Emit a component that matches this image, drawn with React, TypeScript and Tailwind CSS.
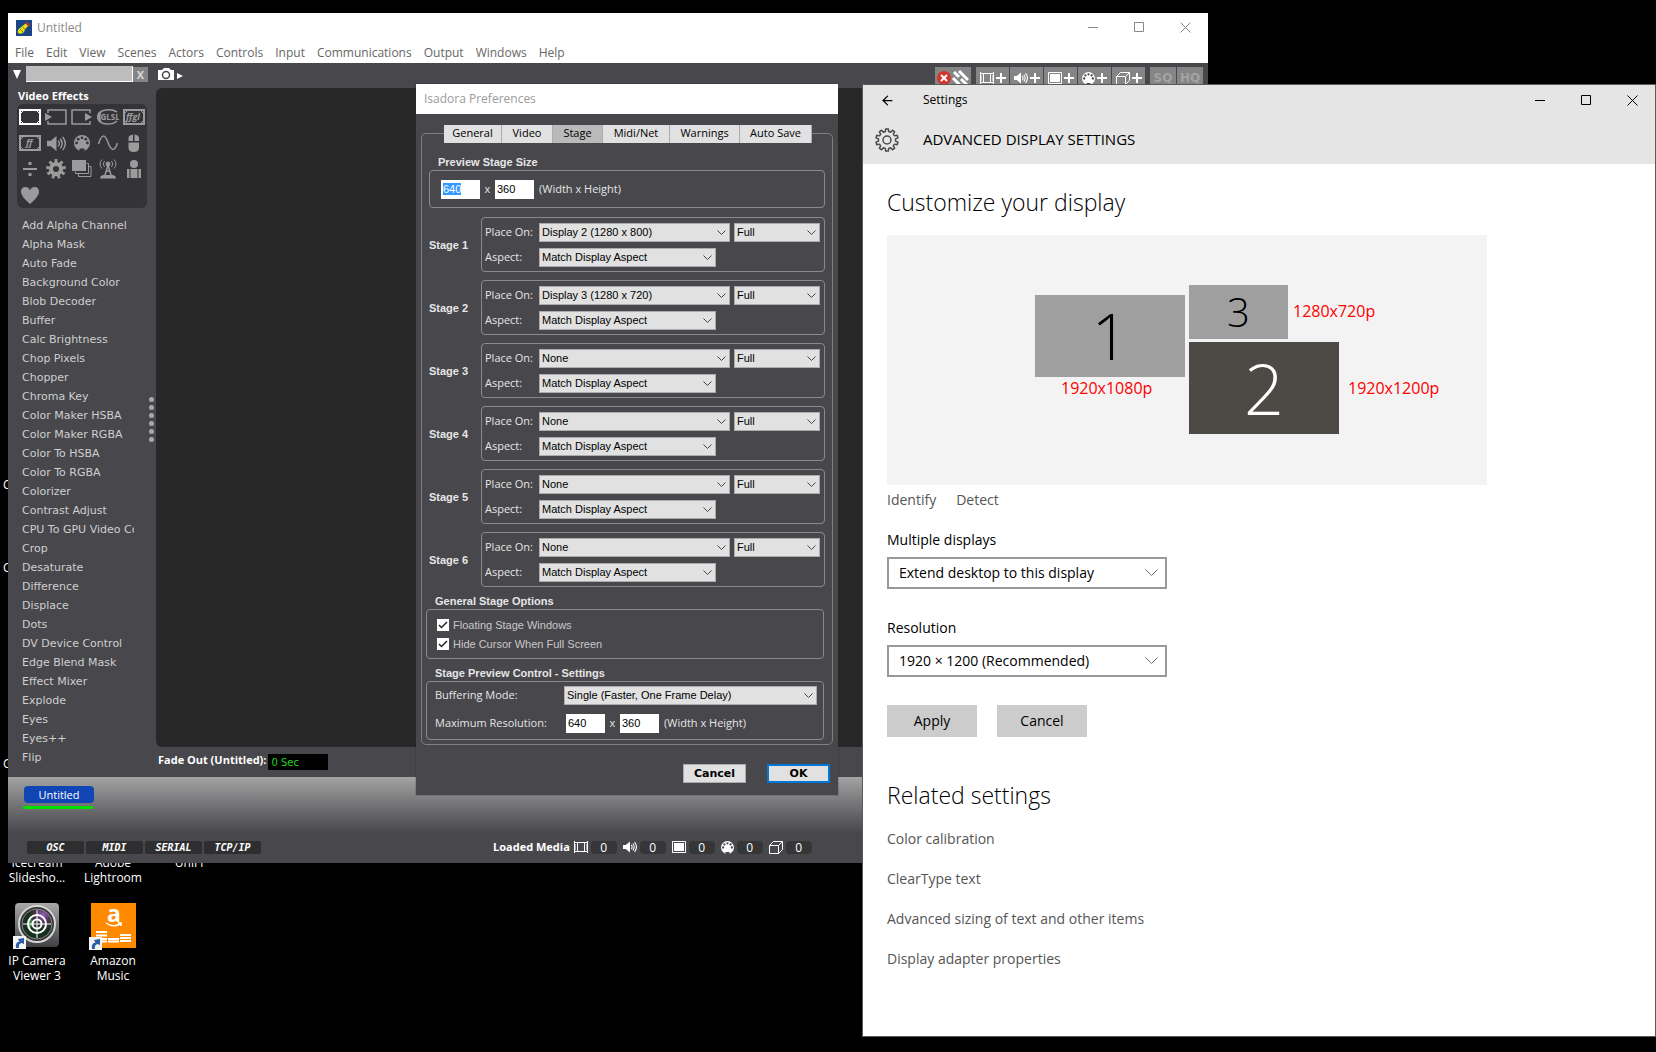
import { useEffect, useRef } from "react";
import type { ReactNode } from "react";
import { LuArrowLeft } from "react-icons/lu";

const actors = [
	"Add Alpha Channel",
	"Alpha Mask",
	"Auto Fade",
	"Background Color",
	"Blob Decoder",
	"Buffer",
	"Calc Brightness",
	"Chop Pixels",
	"Chopper",
	"Chroma Key",
	"Color Maker HSBA",
	"Color Maker RGBA",
	"Color To HSBA",
	"Color To RGBA",
	"Colorizer",
	"Contrast Adjust",
	"CPU To GPU Video Converter",
	"Crop",
	"Desaturate",
	"Difference",
	"Displace",
	"Dots",
	"DV Device Control",
	"Edge Blend Mask",
	"Effect Mixer",
	"Explode",
	"Eyes",
	"Eyes++",
	"Flip",
];

const menus = [
	"File",
	"Edit",
	"View",
	"Scenes",
	"Actors",
	"Controls",
	"Input",
	"Communications",
	"Output",
	"Windows",
	"Help",
];

const stages = [
	{ title: "Stage 1", display: "Display 2 (1280 x 800)" },
	{ title: "Stage 2", display: "Display 3 (1280 x 720)" },
	{ title: "Stage 3", display: "None" },
	{ title: "Stage 4", display: "None" },
	{ title: "Stage 5", display: "None" },
	{ title: "Stage 6", display: "None" },
];

const tabs = [
	{ title: "General", width: "w-[58px]" },
	{ title: "Video", width: "w-[51px]" },
	{ title: "Stage", width: "w-[50px]" },
	{ title: "Midi/Net", width: "w-[67px]" },
	{ title: "Warnings", width: "w-[70px]" },
	{ title: "Auto Save", width: "w-[72px]" },
];

const relatedLinks = [
	"Color calibration",
	"ClearType text",
	"Advanced sizing of text and other items",
	"Display adapter properties",
];

const gearPath = (c: number, outer: number, inner: number, teeth: number) => {
	const points: string[] = [];
	const step = (Math.PI * 2) / teeth;
	for (let i = 0; i < teeth; i++) {
		const a = i * step - Math.PI / 2;
		[
			[inner, -0.3],
			[outer, -0.2],
			[outer, 0.2],
			[inner, 0.3],
		].forEach(([r, k]) => {
			points.push(`${(c + r * Math.cos(a + k * step)).toFixed(2)} ${(c + r * Math.sin(a + k * step)).toFixed(2)}`);
		});
	}
	return `M${points.join("L")}Z`;
};

/* Icons shared by the toolbox, the toolbar and the media counters */

const FilmIcon = () => (
	<svg width="14" height="12" viewBox="0 0 14 12" fill="none" stroke="currentColor" aria-hidden="true">
		<path d="M0 1.500h14M0 10.500h14M3.500 1.500v9M10.500 1.500v9" />
		<path d="M0 4h2M0 6h2M0 8h2M12 4h2M12 6h2M12 8h2" />
		<path d="M.5 0v12M13.500 0v12" />
	</svg>
);

const SpeakerIcon = ({ size = 14 }: { size?: number }) => (
	<svg width={size} height={size} viewBox="0 0 20 18" fill="none" stroke="currentColor" strokeWidth="1.5" aria-hidden="true">
		<path d="M0 6h4l6-5v16l-6-5H0z" fill="currentColor" stroke="none" />
		<path d="M12 6q2 3 0 6M14 4q4 5 0 10M16.500 2q5.500 7 0 14" />
	</svg>
);

const PictureIcon = () => (
	<svg width="14" height="12" viewBox="0 0 14 12" aria-hidden="true">
		<path d="M.5 .5h13v11H.5z" fill="none" stroke="currentColor" />
		<path d="M2 2h10v8H2z" fill="currentColor" />
	</svg>
);

const MidiIcon = ({ size = 13, hole = "#48474c" }: { size?: number; hole?: string }) => (
	<svg width={size} height={size} viewBox="0 0 16 16" aria-hidden="true">
		<circle cx="8" cy="8" r="8" fill="currentColor" />
		<g fill={hole}>
			<circle cx="2.600" cy="8" r="1.400" />
			<circle cx="4.200" cy="4.200" r="1.400" />
			<circle cx="8" cy="2.800" r="1.400" />
			<circle cx="11.800" cy="4.200" r="1.400" />
			<circle cx="13.400" cy="8" r="1.400" />
			<path d="M5.500 16v-2.500h5V16z" />
		</g>
	</svg>
);

const CubeIcon = () => (
	<svg width="14" height="13" viewBox="0 0 14 13" fill="none" stroke="currentColor" aria-hidden="true">
		<path d="M.5 4.500h9v8h-9zM.5 4.500l4-4h9l-4 4M13.500 .5v8l-4 4" />
	</svg>
);

const Frame = ({ children, bright }: { children?: ReactNode; bright?: boolean }) => (
	<svg width="22" height="16" viewBox="0 0 22 16" fill="none" stroke={bright ? "#fff" : "#9b9b9b"} aria-hidden="true">
		<path d="M1 1h20v14H1z" strokeWidth="2" />
		<path d="M2 4l2-2M18 2l2 2M2 12l2 2M18 14l2-2" />
		{children}
	</svg>
);

const tools: { name: string; icon: ReactNode }[] = [
	{ name: "Video Effects", icon: <Frame bright /> },
	{
		name: "Video Sources",
		icon: (
			<svg width="22" height="16" viewBox="0 0 22 16" aria-hidden="true">
				<path d="M3 4V1h18v14H3v-3" fill="none" stroke="currentColor" strokeWidth="1.500" />
				<path d="M0 4l7 4-7 4z" fill="currentColor" />
			</svg>
		),
	},
	{
		name: "Video Outputs",
		icon: (
			<svg width="22" height="16" viewBox="0 0 22 16" aria-hidden="true">
				<path d="M19 4V1H1v14h18v-3" fill="none" stroke="currentColor" strokeWidth="1.500" />
				<path d="M14 4l7 4-7 4z" fill="currentColor" />
			</svg>
		),
	},
	{
		name: "GLSL Shaders",
		icon: (
			<svg width="22" height="16" viewBox="0 0 22 16" aria-hidden="true">
				<path d="M20 3Q15 0 9 1 1 2 .5 8q.5 6 8.500 7 7 .5 11-3" fill="none" stroke="currentColor" strokeWidth="1.500" />
				<path d="M5 2Q1 5 1 8t4 6Q2 8 5 2z" fill="currentColor" />
				<text x="3.500" y="11" fontSize="8" fontWeight="700" fontFamily="Open Sans, sans-serif" fill="currentColor">
					GLSL
				</text>
			</svg>
		),
	},
	{
		name: "FreeFrame GL",
		icon: (
			<Frame>
				<text x="3" y="11" fontSize="9" fontWeight="700" fontStyle="italic" fontFamily="Open Sans, sans-serif" fill="#9b9b9b" stroke="none">
					ffgl
				</text>
			</Frame>
		),
	},
	{
		name: "FreeFrame",
		icon: (
			<Frame>
				<text x="7" y="11" fontSize="9" fontWeight="700" fontStyle="italic" fontFamily="Open Sans, sans-serif" fill="#9b9b9b" stroke="none">
					ff
				</text>
			</Frame>
		),
	},
	{ name: "Audio", icon: <SpeakerIcon size={19} /> },
	{ name: "MIDI", icon: <MidiIcon size={16} hole="#343338" /> },
	{
		name: "Generators",
		icon: (
			<svg width="20" height="16" viewBox="0 0 20 16" fill="none" stroke="currentColor" strokeWidth="1.500" aria-hidden="true">
				<path d="M.5 9Q5-6 10 7.500T19.500 8" />
			</svg>
		),
	},
	{
		name: "Mouse and Keyboard",
		icon: (
			<svg width="12" height="18" viewBox="0 0 12 18" fill="currentColor" aria-hidden="true">
				<path d="M.5 7V4Q.5 1 5 .5V7zM6.500 7V.5Q11 1 11 4v3zM.5 8.500h10.500V14q0 4-5.200 4T.5 14z" />
			</svg>
		),
	},
	{
		name: "Calculation",
		icon: (
			<svg width="16" height="16" viewBox="0 0 16 16" fill="currentColor" aria-hidden="true">
				<path d="M6.500 1h3v3h-3zM1 7h14v2H1zM6.500 12h3v3h-3z" />
			</svg>
		),
	},
	{
		name: "Controls",
		icon: (
			<svg width="20" height="20" viewBox="0 0 20 20" aria-hidden="true">
				<path d={gearPath(10, 10, 7, 9)} fill="currentColor" />
				<circle cx="10" cy="10" r="3" fill="#343338" />
			</svg>
		),
	},
	{
		name: "Stage",
		icon: (
			<svg width="20" height="18" viewBox="0 0 20 18" fill="none" stroke="currentColor" aria-hidden="true">
				<path d="M0 0h14v11H0z" fill="currentColor" stroke="none" />
				<path d="M14.500 3.500h2v10h-13v-2M16.500 6.500h2.500v10H6.500v-3" />
			</svg>
		),
	},
	{
		name: "Communications",
		icon: (
			<svg width="18" height="20" viewBox="0 0 18 20" fill="none" stroke="currentColor" aria-hidden="true">
				<path d="M5.500 2q-2.500 3 0 6M3 .5q-4 4.500 0 9M12.500 2q2.500 3 0 6M15 .5q4 4.500 0 9" />
				<circle cx="9" cy="5" r="2" fill="currentColor" />
				<path d="M9 6L6 16M9 6l3 10M7 12h4" strokeWidth="1.500" />
				<path d="M1 19.500q0-3 3-3.500h10q3 .5 3 3.500z" fill="currentColor" stroke="none" />
			</svg>
		),
	},
	{
		name: "User Actors",
		icon: (
			<svg width="14" height="18" viewBox="0 0 14 18" fill="currentColor" aria-hidden="true">
				<circle cx="7" cy="4" r="4" />
				<path d="M0 9h2.500v9H0zM3.500 9h7v9h-7zM11.500 9H14v9h-2.500z" />
			</svg>
		),
	},
	{
		name: "Favorites",
		icon: (
			<svg width="18" height="17" viewBox="0 0 18 17" fill="currentColor" aria-hidden="true">
				<path d="M9 17Q0 9.500 0 5 0 0 4.500 0 8 0 9 3.500 10 0 13.500 0 18 0 18 5q0 4.500-9 12z" />
			</svg>
		),
	},
];

const media = [
	{ name: "Movies", icon: <FilmIcon /> },
	{ name: "Sounds", icon: <SpeakerIcon /> },
	{ name: "Pictures", icon: <PictureIcon /> },
	{ name: "MIDI files", icon: <MidiIcon /> },
	{ name: "3D models", icon: <CubeIcon /> },
];

const WindowButtons = ({ className }: { className: string }) => (
	<div className={`flex ${className}`}>
		<button type="button" aria-label="Minimize" className="flex w-[46px] justify-center">
			<svg width="11" height="11" fill="none" stroke="currentColor">
				<path d="M0 5.500h10" />
			</svg>
		</button>
		<button type="button" aria-label="Maximize" className="flex w-[46px] justify-center">
			<svg width="11" height="11" fill="none" stroke="currentColor">
				<path d="M.5 .5h9v9h-9z" />
			</svg>
		</button>
		<button type="button" aria-label="Close" className="flex w-[46px] justify-center">
			<svg width="11" height="11" fill="none" stroke="currentColor">
				<path d="M.5 .5l10 10M10.500 .5l-10 10" />
			</svg>
		</button>
	</div>
);

const Dropdown = ({ id, label, value, className }: { id: string; label?: string; value: string; className: string }) => (
	<div className={`relative ${className}`}>
		<select
			id={id}
			aria-label={label}
			className="block h-[19px] w-full appearance-none border border-[#acacac] bg-[#e1e1e1] pl-[2px] font-[family-name:'Liberation_Sans',Arial,sans-serif] text-[11px] leading-[17px] text-black"
		>
			<option>{value}</option>
		</select>
		<svg
			width="9"
			height="6"
			viewBox="0 0 9 6"
			fill="none"
			stroke="#444"
			className="pointer-events-none absolute top-[7px] right-1"
		>
			<path d="M.5 .5l4 4 4-4" />
		</svg>
	</div>
);

const SettingsSelect = ({ id, value }: { id: string; value: string }) => (
	<div className="relative w-[280px]">
		<select id={id} className="block h-8 w-full appearance-none border-2 border-[#999] bg-white pl-[10px] text-sm text-black">
			<option>{value}</option>
		</select>
		<svg
			width="13"
			height="8"
			viewBox="0 0 13 8"
			fill="none"
			stroke="#666"
			className="pointer-events-none absolute top-3 right-[9px]"
		>
			<path d="M.5 .5l6 6 6-6" />
		</svg>
	</div>
);

const SizeInputs = ({ name, selectFirst }: { name: string; selectFirst?: boolean }) => {
	const first = useRef<HTMLInputElement>(null);

	useEffect(() => {
		if (selectFirst) {
			first.current?.focus();
			first.current?.select();
		}
	}, [selectFirst]);

	const box =
		"h-[19px] w-[39px] bg-white pl-[2px] pb-[1px] font-[family-name:'Liberation_Sans',Arial,sans-serif] text-[11px] text-black outline-none selection:bg-[#3399ff] selection:text-white";

	return (
		<div className="flex items-center">
			<input ref={first} aria-label={`${name} width`} defaultValue="640" className={box} />
			<span className="w-[15px] text-center">x</span>
			<input aria-label={`${name} height`} defaultValue="360" className={box} />
			<span className="ml-[5px]">(Width x Height)</span>
		</div>
	);
};

const DesktopIcon = ({ label, children }: { label: string[]; children?: ReactNode }) => (
	<a href="#" className="flex w-[76px] flex-col items-center text-center text-[12px] leading-[15px] text-white">
		<span className="mb-1 flex h-[48px] items-center">{children}</span>
		{label.map((line) => (
			<span key={line}>{line}</span>
		))}
	</a>
);

const Shortcut = () => (
	<svg width="13" height="13" viewBox="0 0 13 13" className="absolute -bottom-[2px] -left-[2px]">
		<path d="M0 0h13v13H0z" fill="#f4f4f4" />
		<path d="M3 12Q2 6 6.500 5.500L5 3l6-1v6L8.500 7Q5 8 6 12z" fill="#2a5ca8" />
	</svg>
);

const Desktop = () => (
	<>
		<div className="absolute top-[476px] left-[3px] flex flex-col text-[12px] leading-[17px] text-white">
			<span className="mb-[66px]">C</span>
			<span className="mb-[179px]">C</span>
			<span>G</span>
		</div>
		<div className="absolute top-[803px] left-[-1px] grid grid-cols-3 gap-y-[16px]">
			<DesktopIcon label={["Icecream", "Slidesho..."]} />
			<DesktopIcon label={["Adobe", "Lightroom"]} />
			<DesktopIcon label={["UniFi"]} />
			<DesktopIcon label={["IP Camera", "Viewer 3"]}>
				<span className="relative">
					<svg width="44" height="44" viewBox="0 0 44 44">
						<defs>
							<linearGradient id="case" x2="0" y2="1">
								<stop stopColor="#a9a9a9" />
								<stop offset="1" stopColor="#3f4044" />
							</linearGradient>
							<radialGradient id="lens" cx=".7" cy=".2">
								<stop stopColor="#9a62c0" />
								<stop offset=".5" stopColor="#4a3350" />
								<stop offset="1" stopColor="#15301c" />
							</radialGradient>
						</defs>
						<rect width="44" height="44" rx="4" fill="url(#case)" />
						<circle cx="22" cy="21" r="18" fill="#333" stroke="#d5d5d5" strokeWidth="2" />
						<circle cx="22" cy="21" r="15" fill="url(#lens)" stroke="#888" />
						<path d="M14 26q-4-6 1-11l5 5z" fill="#3f8a45" />
						<g fill="none" stroke="#fff">
							<circle cx="22" cy="21" r="9" strokeWidth="2" />
							<circle cx="22" cy="21" r="4.500" strokeWidth="2" />
							<path d="M22 7v28M8 21h28" />
						</g>
					</svg>
					<Shortcut />
				</span>
			</DesktopIcon>
			<DesktopIcon label={["Amazon", "Music"]}>
				<span className="relative">
					<svg width="45" height="45" viewBox="0 0 45 45">
						<path d="M0 0h45v45H0z" fill="#ff8a00" />
						<text x="16" y="19" fontSize="23" fontWeight="700" fontFamily="Open Sans, sans-serif" fill="#fff">
							a
						</text>
						<path d="M15 20q7 5 14 1M27 20h3v3" fill="none" stroke="#fff" strokeWidth="1.500" />
						<path
							d="M5 29h11M5 32.500h11M5 36h11M17 36h11M17 38.500h11M29 32h11M29 35h11M29 38h11M5 38.500h11"
							stroke="#fff"
							strokeWidth="2"
						/>
					</svg>
					<Shortcut />
				</span>
			</DesktopIcon>
		</div>
	</>
);

const toolbarButton = "flex h-[22px] items-center justify-center gap-[2px] bg-[#858585] text-white";

const Toolbar = () => (
	<div className="flex h-[25px] items-start">
		<button type="button" aria-label="Show categories" className="mt-[7px] ml-[5px]">
			<svg width="8" height="9" fill="#fff">
				<path d="M0 0h8L4 9z" />
			</svg>
		</button>
		<input aria-label="Search actors" className="mt-[3px] ml-[5px] h-4 w-[107px] border-r border-b border-white bg-[#bdbdbd]" />
		<button
			type="button"
			aria-label="Clear search"
			className="mt-1 h-[15px] w-[15px] bg-[#858585] text-[11px] leading-[15px] font-bold text-[#d8d8d8]"
		>
			X
		</button>
		<button type="button" aria-label="Snapshot" className="mt-[5px] ml-[10px]">
			<svg width="26" height="13" viewBox="0 0 26 13">
				<path d="M0 2h4l2-2h5l2 2h3v10H0z" fill="#fff" />
				<circle cx="8" cy="7" r="3.500" fill="none" stroke="#48474c" strokeWidth="1.500" />
				<path d="M19 5l6 3-6 3z" fill="#fff" />
			</svg>
		</button>
		<div className="mt-1 mr-[5px] ml-auto flex gap-px text-base leading-none font-bold">
			<button type="button" aria-label="Stop connections" className={`${toolbarButton} mr-1 w-9`}>
				<svg width="32" height="16" viewBox="0 0 32 16">
					<circle cx="7" cy="8" r="7" fill="#d3352c" />
					<path d="M4 5l6 6M10 5l-6 6" stroke="#fff" strokeWidth="2" />
					<path d="M16 8l7 7M17 2l5 5M24 9l6 6M22 1l9 9" stroke="#fff" strokeWidth="3" />
				</svg>
			</button>
			{media.map((item) => (
				<button key={item.name} type="button" aria-label={`Add ${item.name}`} className={`${toolbarButton} w-[33px]`}>
					{item.icon}
					<svg width="10" height="10" stroke="#fff" strokeWidth="2">
						<path d="M5 0v10M0 5h10" />
					</svg>
				</button>
			))}
			<button
				type="button"
				className={`${toolbarButton} ml-1 w-[26px] font-[family-name:'DejaVu_Sans',Verdana,sans-serif] text-[12px]`}
			>
				<span className="text-[#a3a3a3]">SQ</span>
			</button>
			<button
				type="button"
				className={`${toolbarButton} w-[26px] font-[family-name:'DejaVu_Sans',Verdana,sans-serif] text-[12px]`}
			>
				<span className="text-[#a3a3a3]">HQ</span>
			</button>
		</div>
	</div>
);

const Sidebar = () => (
	<aside className="w-[148px] shrink-0 pb-[10px]">
		<h2 className="pl-[10px] text-[11px] leading-[15px] font-bold text-white">Video Effects</h2>
		<div className="mt-px mr-[9px] ml-[9px] grid grid-cols-5 rounded-md bg-[#343338]">
			{tools.map((tool) => (
				<button
					key={tool.name}
					type="button"
					aria-label={tool.name}
					className="flex h-[26px] items-center justify-center text-[#9b9b9b]"
				>
					{tool.icon}
				</button>
			))}
		</div>
		<div className="mt-2 flex items-center">
			<ul className="w-[126px] pl-[14px] font-[family-name:'DejaVu_Sans',Verdana,sans-serif] text-[11px] leading-[19px] text-[#cfcfcf]">
				{actors.map((actor) => (
					<li key={actor} className="overflow-hidden whitespace-nowrap">
						{actor}
					</li>
				))}
			</ul>
			<div className="mb-[145px] ml-[15px] flex flex-col gap-[3px]">
				{[0, 1, 2, 3, 4, 5].map((dot) => (
					<span key={dot} className="h-[5px] w-[5px] rounded-full bg-[#a9a9ad]" />
				))}
			</div>
		</div>
	</aside>
);

const IsadoraWindow = () => (
	<section className="absolute top-[13px] right-[448px] left-2 bg-[#48474c]">
		<header className="bg-white">
			<div className="flex h-[29px] items-center pl-2 text-[#888]">
				<svg width="16" height="16" viewBox="0 0 16 16">
					<path d="M0 0h16v16H0z" fill="#1c4588" />
					<path d="M2 13q-1-3 2-5l5-4q3-2 4 0 0 2-3 4L8 12q-3 3-6 1z" fill="#e8e010" />
					<path d="M9 3q3-2 5 1l-1 3-2-2z" fill="#a33" />
					<path d="M4 9l3 3M7 7l2 3" stroke="#7a7a10" />
				</svg>
				<h1 className="ml-[5px] text-[12px]">Untitled</h1>
				<WindowButtons className="ml-auto" />
			</div>
			<nav className="flex h-[21px] items-center gap-3 pl-[7px] text-[12px] leading-4 text-[#666]">
				{menus.map((menu) => (
					<button key={menu} type="button">
						{menu}
					</button>
				))}
			</nav>
		</header>

		<Toolbar />
		<div className="flex">
			<Sidebar />
			<div className="flex flex-1 flex-col">
				<div className="flex-1 rounded-l-md bg-[#282829]" />
				<div className="flex h-[30px] items-center pl-[2px]">
					<label htmlFor="fade-out" className="mb-1 text-[11px] font-bold text-white">
						Fade Out (Untitled):
					</label>
					<input
						id="fade-out"
						defaultValue="0 Sec"
						className="ml-[2px] h-4 w-[60px] bg-black pl-[3px] font-[family-name:'DejaVu_Sans',Verdana,sans-serif] text-[10px] text-[#22d322]"
					/>
				</div>
			</div>
		</div>

		<div className="h-[56px] bg-linear-to-b from-[#a3a3a3] to-[#48474c] pt-[9px] pl-[15px]">
			<button type="button" className="ml-px block h-[17px] w-[70px] rounded-sm bg-[#1245b4] text-[11px] leading-[17px] text-white">
				Untitled
			</button>
			<div className="mt-[3px] h-[3px] w-[70px] bg-[#00e000]" />
		</div>
		<footer className="flex h-[30px] items-center pb-[2px] pl-[19px] text-white">
			<ul className="flex gap-[2px] font-[family-name:'DejaVu_Sans_Mono',monospace] text-[10px] leading-[13px] font-bold italic">
				{["OSC", "MIDI", "SERIAL", "TCP/IP"].map((port) => (
					<li key={port} className="w-[57px] rounded-xs bg-[#2e2e30] text-center">
						{port}
					</li>
				))}
			</ul>
			<h2 className="ml-[232px] text-[11px] font-bold">Loaded Media</h2>
			<ul className="ml-1 flex gap-[6px]">
				{media.map((item) => (
					<li key={item.name} className="flex items-center gap-[3px]">
						{item.icon}
						<span className="w-[26px] rounded-sm bg-[#363639] text-center text-[12px] leading-[13px]">0</span>
					</li>
				))}
			</ul>
		</footer>
	</section>
);

const groupBox = "rounded-[4px] border border-[#8a8a8d]";
const groupTitle = "font-[family-name:'Liberation_Sans',Arial,sans-serif] text-[11px] leading-4 font-bold";

const PreferencesDialog = () => (
	<section className="absolute top-[84px] left-[416px] w-[422px] bg-[#48474c] text-[11px] text-[#e6e6e6] shadow-[0_0_1px_#222]">
		<h1 className="h-[30px] bg-white pl-2 text-[12px] leading-[29px] text-[#9b9b9b]">Isadora Preferences</h1>

		<div role="tablist" className="relative z-10 mt-[11px] ml-7 flex h-[18px]">
			{tabs.map((tab) => (
				<button
					key={tab.title}
					type="button"
					role="tab"
					aria-selected={tab.title === "Stage"}
					className={`border-r border-[#acacac] pb-[2px] leading-4 text-black ${tab.width} ${
						tab.title === "Stage" ? "bg-[#bababa]" : "bg-[#e1e1e1]"
					}`}
				>
					{tab.title}
				</button>
			))}
		</div>

		<div className="mx-[5px] -mt-[10px] rounded-[5px] border border-[#7f7f82] pt-5 pr-[7px] pb-1 pl-1">
			<div className="ml-[3px]">
				<h2 className={`${groupTitle} pl-[9px]`}>Preview Stage Size</h2>
				<div className={`${groupBox} h-[38px] pt-[9px] pl-[11px]`}>
					<SizeInputs name="Preview stage" selectFirst />
				</div>

				<div className="mt-[9px] flex flex-col gap-2">
					{stages.map((stage, index) => (
						<div key={stage.title} className="flex items-center">
							<h3 className={`${groupTitle} w-[52px]`}>{stage.title}</h3>
							<div className={`${groupBox} flex flex-1 flex-col gap-[6px] pt-[5px] pb-1 pl-[3px]`}>
								<div className="flex">
									<label htmlFor={`place-${index}`} className="w-[54px] leading-[17px]">
										Place On:
									</label>
									<Dropdown id={`place-${index}`} value={stage.display} className="w-[191px]" />
									<Dropdown id={`mode-${index}`} label={`${stage.title} mode`} value="Full" className="ml-1 w-[86px]" />
								</div>
								<div className="flex">
									<label htmlFor={`aspect-${index}`} className="w-[54px] leading-[17px]">
										Aspect:
									</label>
									<Dropdown id={`aspect-${index}`} value="Match Display Aspect" className="w-[177px]" />
								</div>
							</div>
						</div>
					))}
				</div>
			</div>

			<h2 className={`${groupTitle} mt-[6px] pl-[9px]`}>General Stage Options</h2>
			<div className={`${groupBox} mr-px flex h-[50px] flex-col gap-[5px] pt-2 pl-[10px]`}>
				{["Floating Stage Windows", "Hide Cursor When Full Screen"].map((option) => (
					<label
						key={option}
						className="flex h-[14px] items-center gap-1 font-[family-name:'Liberation_Sans',Arial,sans-serif] text-[#c9c9c9]"
					>
						<span className="relative flex">
							<input type="checkbox" defaultChecked className="h-3 w-3 appearance-none bg-white" />
							<svg width="12" height="12" fill="none" stroke="#222" className="pointer-events-none absolute">
								<path d="M2 6l2.500 2.500L10 3" strokeWidth="1.500" />
							</svg>
						</span>
						{option}
					</label>
				))}
			</div>

			<h2 className={`${groupTitle} mt-[6px] pl-[9px]`}>Stage Preview Control - Settings</h2>
			<div className={`${groupBox} mr-px h-[59px] pt-1 pr-[6px] pl-2`}>
				<div className="flex justify-between">
					<label htmlFor="buffering" className="leading-[17px]">
						Buffering Mode:
					</label>
					<Dropdown id="buffering" value="Single (Faster, One Frame Delay)" className="w-[253px]" />
				</div>
				<div className="mt-[9px] flex items-center">
					<span className="w-[131px]">Maximum Resolution:</span>
					<SizeInputs name="Maximum" />
				</div>
			</div>
		</div>

		<div className="flex justify-end gap-[21px] pt-[19px] pr-2 pb-3 font-[family-name:'DejaVu_Sans',Verdana,sans-serif] font-bold text-black">
			<button type="button" className="h-[19px] w-[63px] border border-[#acacac] bg-[#e1e1e1] leading-[17px]">
				Cancel
			</button>
			<button type="button" className="h-[19px] w-[63px] border-2 border-[#0078d7] bg-[#e1e1e1] leading-[15px]">
				OK
			</button>
		</div>
	</section>
);

const SettingsWindow = () => (
	<section className="absolute top-[84px] right-0 bottom-[15px] left-[862px] border border-[#5a5a5a] bg-white text-sm text-black">
		<header className="bg-[#e5e5e5] pb-2">
			<div className="flex h-[30px] items-center pl-[17px]">
				<button type="button" aria-label="Back">
					<LuArrowLeft size={15} />
				</button>
				<span className="ml-[28px] text-[12px]">Settings</span>
				<WindowButtons className="ml-auto" />
			</div>
			<div className="flex h-[41px] items-center pt-[9px] pl-3">
				<svg width="24" height="24" viewBox="0 0 24 24" fill="none" stroke="#4a4a4a" strokeWidth="1.500" strokeLinejoin="round">
					<path d={gearPath(12, 11.2, 8.6, 10)} />
					<circle cx="12" cy="12" r="4" />
				</svg>
				<h1 className="ml-6 text-[15px] font-medium">ADVANCED DISPLAY SETTINGS</h1>
			</div>
		</header>

		<main className="pl-6">
			<h2 className="pt-[22px] text-[23px] leading-8 font-light">Customize your display</h2>
			<div className="relative mt-[17px] h-[250px] w-[600px] bg-[#f3f3f3]">
				<div className="absolute top-[60px] left-[148px] flex h-[82px] w-[150px] items-center justify-center bg-[#9f9f9f] text-[64px] font-light">
					1
				</div>
				<div className="absolute top-[50px] left-[302px] flex h-[54px] w-[99px] items-center justify-center bg-[#9f9f9f] text-[40px] font-light">
					3
				</div>
				<div className="absolute top-[107px] left-[302px] flex h-[92px] w-[150px] items-center justify-center bg-[#4d4a46] text-[70px] font-light text-white">
					2
				</div>
				<span className="absolute top-[64px] left-[406px] text-base leading-6 text-[#ff0000]">1280x720p</span>
				<span className="absolute top-[141px] left-[174px] text-base leading-6 text-[#ff0000]">1920x1080p</span>
				<span className="absolute top-[141px] left-[461px] text-base leading-6 text-[#ff0000]">1920x1200p</span>
			</div>
			<div className="mt-[5px] flex gap-5 leading-5 text-[#555]">
				<a href="#">Identify</a>
				<a href="#">Detect</a>
			</div>

			<label htmlFor="multiple" className="mt-5 mb-[7px] block leading-5">
				Multiple displays
			</label>
			<SettingsSelect id="multiple" value="Extend desktop to this display" />
			<label htmlFor="resolution" className="mt-[29px] mb-[7px] block leading-5">
				Resolution
			</label>
			<SettingsSelect id="resolution" value="1920 × 1200 (Recommended)" />

			<div className="mt-7 flex gap-5">
				<button type="button" className="h-8 w-[90px] bg-[#ccc]">
					Apply
				</button>
				<button type="button" className="h-8 w-[90px] bg-[#ccc]">
					Cancel
				</button>
			</div>

			<h2 className="mt-[42px] text-[23px] leading-8 font-light">Related settings</h2>
			<ul className="mt-[18px] flex flex-col gap-5 leading-5 text-[#555]">
				{relatedLinks.map((link) => (
					<li key={link}>
						<a href="#">{link}</a>
					</li>
				))}
			</ul>
		</main>
	</section>
);

const App = () => {
	return (
		<div className="relative h-screen min-h-[1052px] overflow-hidden bg-black font-[family-name:'Open_Sans','Segoe_UI',sans-serif]">
			<Desktop />
			<IsadoraWindow />
			<PreferencesDialog />
			<SettingsWindow />
		</div>
	);
};

export default App;
